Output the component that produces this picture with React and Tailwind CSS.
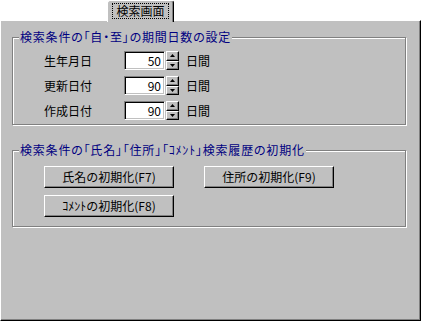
import React from 'react'

const ROWS = [
  { label: '生年月日', value: '50' },
  { label: '更新日付', value: '90' },
  { label: '作成日付', value: '90' },
]

function GroupBox({ title, className = '', children }) {
  return (
    <div
      className={`relative w-[394px] border border-[#808080] shadow-[1px_1px_0_#ffffff,inset_1px_1px_0_#ffffff] ${className}`}
    >
      <span className="absolute left-[6px] top-[-8px] bg-[#c0c0c0] px-[1px] text-[12px] leading-[14px] tracking-[0.8px] text-[#000080] whitespace-nowrap [font-feature-settings:'palt']">
        {title}
      </span>
      {children}
    </div>
  )
}

function SpinButton({ dir }) {
  return (
    <div className="flex flex-1 items-center justify-center border border-t-white border-l-white border-r-black border-b-black bg-[#c0c0c0] shadow-[inset_-1px_-1px_0_#808080]">
      <svg width="5" height="3" viewBox="0 0 5 3">
        {dir === 'up' ? <path d="M2.5 0 5 3H0z" fill="#000" /> : <path d="M0 0h5L2.5 3z" fill="#000" />}
      </svg>
    </div>
  )
}

function Button({ children }) {
  return (
    <button
      type="button"
      className="flex h-[22px] w-[130px] items-center justify-center border border-t-white border-l-white border-r-black border-b-black bg-[#c0c0c0] text-[12px] leading-none text-black shadow-[inset_-1px_-1px_0_#808080]"
    >
      {children}
    </button>
  )
}

export default function App() {
  return (
    <div className="flex h-[321px] w-[421px] flex-col bg-white font-['Noto_Sans_CJK_JP','Noto_Sans',sans-serif] text-black">
      {/* tab strip */}
      <div className="flex h-[20px] shrink-0">
        <div className="relative z-10 ml-[107px] flex h-[22px] w-[67px] justify-center rounded-t-[3px] border-t border-l border-r border-t-white border-l-white border-r-black bg-[#c0c0c0] pt-[2px] shadow-[inset_-1px_0_0_#808080]">
          <span className="h-[16px] border border-dotted border-black px-[3px] text-[12px] leading-[14px]">
            検索画面
          </span>
        </div>
      </div>

      {/* panel */}
      <div className="flex-1 border border-t-white border-l-white border-r-black border-b-black bg-[#c0c0c0] pl-[11px] pt-[16px] shadow-[inset_-1px_-1px_0_#808080]">
        <GroupBox title="検索条件の「自・至」の期間日数の設定" className="h-[88px] pl-[31px] pt-[13px]">
          <div className="flex flex-col gap-[6px]">
            {ROWS.map((r) => (
              <div key={r.label} className="flex h-[19px] items-center">
                <span className="w-[80px] text-[12px] leading-none">{r.label}</span>
                <div className="flex h-[19px] w-[41px] items-center justify-end border border-t-[#808080] border-l-[#808080] border-r-white border-b-white bg-white pr-[3px] text-[12px] leading-none shadow-[inset_1px_1px_0_#000000,inset_-1px_-1px_0_#c0c0c0]">
                  {r.value}
                </div>
                <div className="ml-[1px] flex h-[19px] w-[13px] flex-col">
                  <SpinButton dir="up" />
                  <SpinButton dir="down" />
                </div>
                <span className="ml-[7px] text-[12px] leading-none">日間</span>
              </div>
            ))}
          </div>
        </GroupBox>

        <GroupBox
          title="検索条件の「氏名」「住所」「ｺﾒﾝﾄ」検索履歴の初期化"
          className="mt-[25px] h-[77px] pl-[31px] pt-[15px]"
        >
          <div className="flex flex-col gap-[7px]">
            <div className="flex gap-[30px]">
              <Button>氏名の初期化(F7)</Button>
              <Button>住所の初期化(F9)</Button>
            </div>
            <Button>ｺﾒﾝﾄの初期化(F8)</Button>
          </div>
        </GroupBox>
      </div>
    </div>
  )
}
